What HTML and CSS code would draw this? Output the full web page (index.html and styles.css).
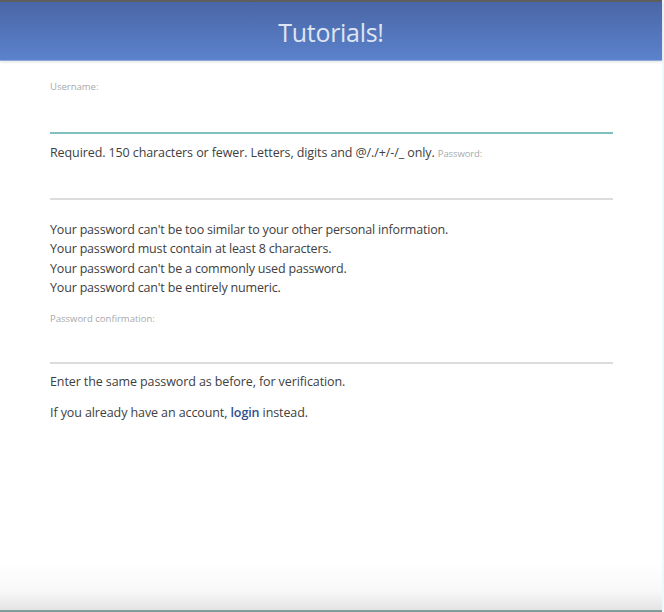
FILE: index.html
```html
<!DOCTYPE html>
<html lang="en">
<head>
<meta charset="utf-8">
<title>Tutorials!</title>
<link rel="stylesheet" href="styles.css">
</head>
<body>
<div class="page">
  <header class="nav">
    <h1 class="brand">Tutorials!</h1>
  </header>
  <main class="container">
    <form class="form">
      <label class="label label-first" for="username">Username:</label>
      <div class="input input-active" id="username"></div>
      <p class="help help-user">Required. 150 characters or fewer. Letters, digits and @/./+/-/_ only. <label class="label-inline" for="password1">Password:</label></p>
      <div class="input input-pw" id="password1"></div>
      <ul class="rules">
        <li>Your password can't be too similar to your other personal information.</li>
        <li>Your password must contain at least 8 characters.</li>
        <li>Your password can't be a commonly used password.</li>
        <li>Your password can't be entirely numeric.</li>
      </ul>
      <label class="label label-confirm" for="password2">Password confirmation:</label>
      <div class="input input-confirm" id="password2"></div>
      <p class="help help-confirm">Enter the same password as before, for verification.</p>
    </form>
    <p class="help login-line">If you already have an account, <a class="login" href="#">login</a> instead.</p>
  </main>
  <div class="fade"></div>
</div>
</body>
</html>
```

FILE: styles.css
```css
html, body {
  margin: 0;
  padding: 0;
  background: #ffffff;
}
body {
  font-family: "Open Sans", "Noto Sans", sans-serif;
  color: #404040;
}
.page {
  min-height: 612px;
  display: flex;
  flex-direction: column;
  box-sizing: border-box;
  border-right: 2px solid #eef7f9;
}
.nav {
  height: 58px;
  border-top: 2px solid #5e5e5e;
  background: linear-gradient(#4a66a6, #5b82cc);
  display: flex;
  align-items: center;
  justify-content: center;
  box-shadow: 0 1px 0 #8ea8da, 0 2px 3px rgba(0,0,0,0.12);
}
.brand {
  margin: 0;
  font-family: "Open Sans", sans-serif;
  font-weight: 400;
  font-size: 25px;
  color: #dfe5f0;
  letter-spacing: -0.3px;
  padding-top: 2px;
}
.container {
  flex: 1;
  padding: 0 49px 0 50px;
}
.form {
  display: flex;
  flex-direction: column;
}
.label {
  display: block;
  font-size: 9.5px;
  line-height: 14px;
  color: #a9a9a9;
}
.label-first { margin-top: 20px; }
.label-confirm { margin-top: 15px; }
.label-inline {
  font-size: 9.5px;
  color: #a9a9a9;
}
.input {
  border-bottom: 2px solid #dcdcdc;
}
.input-active {
  height: 38px;
  border-bottom-color: #7fc0c2;
}
.input-pw { height: 35px; }
.input-confirm { height: 36px; }
.help {
  margin: 0;
  font-size: 12.5px;
  line-height: 19px;
  letter-spacing: -0.1px;
}
.help-user { margin-top: 9px; }
.help-confirm { margin-top: 8px; }
.rules {
  list-style: none;
  margin: 20px 0 0;
  padding: 0;
  font-size: 12.5px;
  line-height: 19.3px;
  letter-spacing: -0.18px;
}
.login-line { margin-top: 12px; }
.login {
  color: #2d4f8e;
  text-decoration: none;
  font-weight: 600;
}
.fade {
  height: 48px;
  background: linear-gradient(#ffffff, #f8f8f8 60%, #e4e4e4);
  border-bottom: 2px solid #7f9b9c;
}
```
